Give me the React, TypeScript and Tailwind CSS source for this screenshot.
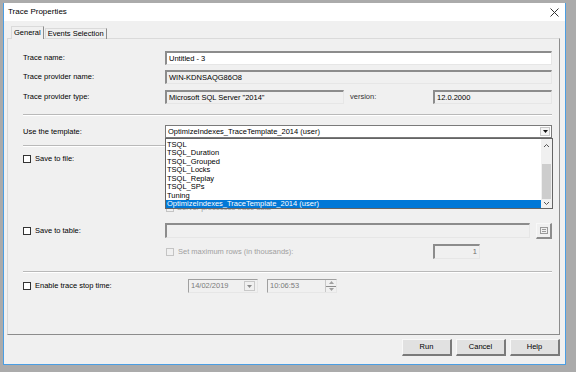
const FONT = "font-['Liberation_Sans',Arial,sans-serif]"

function Check({ disabled }: { disabled?: boolean }) {
  return (
    <span
      className={`block w-[8px] h-[8px] shrink-0 border ${
        disabled ? 'border-[#c4c4c4] bg-[#f0f0f0]' : 'border-[#333333] bg-white'
      }`}
    />
  )
}

function Field({
  className = '',
  white,
  children,
}: {
  className?: string
  white?: boolean
  children?: React.ReactNode
}) {
  return (
    <div
      className={`flex items-center px-[2px] border-t-2 border-l-2 border-b border-r border-t-[#8c8c8c] border-l-[#8c8c8c] border-b-[#e6e6e6] border-r-[#e6e6e6] ${
        white ? 'bg-white' : 'bg-[#f0f0f0]'
      } ${className}`}
    >
      {children}
    </div>
  )
}

function Separator({ className = '' }: { className?: string }) {
  return <div className={`h-[2px] border-t border-t-[#b9b9b9] border-b border-b-white ${className}`} />
}

const TEMPLATES = ['TSQL', 'TSQL_Duration', 'TSQL_Grouped', 'TSQL_Locks', 'TSQL_Replay', 'TSQL_SPs', 'Tuning']

function Button({ label }: { label: string }) {
  return (
    <button className="w-[50px] h-[17px] bg-[#e1e1e1] border border-t-[#f8f8f8] border-l-[#f8f8f8] border-r-2 border-b-2 border-r-[#7a7a7a] border-b-[#7a7a7a] text-center">
      {label}
    </button>
  )
}

export default function App() {
  return (
    <div className={`w-[576px] h-[372px] bg-[#ababab] pt-[3px] pl-[3px] text-[7.5px] leading-none text-black ${FONT}`}>
      <div className="w-[563px] h-[362px] bg-[#f0f0f0] border-l border-r border-b border-[#4b9ee3] flex flex-col">
        {/* Title bar */}
        <div className="h-[18px] shrink-0 bg-white flex items-center justify-between pl-[4px] pr-[6px]">
          <span className="text-[8px]">Trace Properties</span>
          <svg width="9" height="9" viewBox="0 0 9 9" className="mt-[1px]">
            <path d="M0.5 0.5 L8.5 8.5 M8.5 0.5 L0.5 8.5" stroke="#333" strokeWidth="1" />
          </svg>
        </div>

        <div className="flex flex-col pl-[3px] pt-[6px]">
          {/* Tabs */}
          <div className="flex items-end h-[12px] pl-[4px] relative z-10 -mb-px">
            <div className="h-[13px] px-[2px] flex items-center bg-[#f0f0f0] border-t border-l border-[#dadada] border-r border-r-[#8c8c8c]">
              General
            </div>
            <div className="h-[11px] px-[2px] ml-px flex items-center border-t border-l border-[#dadada] border-r border-r-[#8c8c8c]">
              Events Selection
            </div>
          </div>

          {/* Panel */}
          <div className="w-[553px] h-[297px] border border-[#dadada] border-r-[#8c8c8c] border-b-[#8c8c8c] flex flex-col pl-[15px] pr-[7px]">
            <div className="mt-[12px] h-[14px] flex items-center">
              <div className="w-[142px]">Trace name:</div>
              <Field white className="flex-1 h-full">Untitled - 3</Field>
            </div>
            <div className="mt-[5px] h-[14px] flex items-center">
              <div className="w-[142px]">Trace provider name:</div>
              <Field className="flex-1 h-full">WIN-KDNSAQG86O8</Field>
            </div>
            <div className="mt-[6px] h-[14px] flex items-center">
              <div className="w-[142px]">Trace provider type:</div>
              <Field className="w-[179px] h-full">Microsoft SQL Server "2014"</Field>
              <div className="w-[89px] pl-[6px] text-[#333]">version:</div>
              <Field className="flex-1 h-full">12.0.2000</Field>
            </div>
            <Separator className="mt-[10px]" />

            {/* Template */}
            <div className="mt-[9px] h-[13px] flex items-center relative">
              <div className="w-[142px]">Use the template:</div>
              <div className="flex-1 h-full bg-white border border-[#7a7a7a] flex items-center pl-[2px] pr-[1px]">
                <span className="flex-1">OptimizeIndexes_TraceTemplate_2014 (user)</span>
                <span className="w-[10px] h-[9px] flex items-center justify-center border border-[#c8c8c8] bg-[#f4f4f4]">
                  <svg width="5" height="3" viewBox="0 0 5 3">
                    <path d="M0 0 H5 L2.5 3 Z" fill="#111" />
                  </svg>
                </span>
              </div>
              <div className="absolute z-20 top-full left-[142px] -right-px h-[71px] bg-white border border-[#646464] flex">
                <div className="flex-1 flex flex-col pt-px">
                  {TEMPLATES.map((t) => (
                    <div key={t} className="h-[8.75px] flex items-center pl-px">
                      {t}
                    </div>
                  ))}
                  <div className="h-[8.75px] flex items-center pl-px bg-[#0078d7] text-white">
                    OptimizeIndexes_TraceTemplate_2014 (user)
                  </div>
                </div>
                <div className="w-[11px] bg-[#f0f0f0] flex flex-col items-center">
                  <svg width="7" height="9" viewBox="0 0 7 9" className="mt-[2px]">
                    <path d="M1 6 L3.5 3.5 L6 6" stroke="#555" fill="none" />
                  </svg>
                  <div className="mt-[14px] w-[9px] h-[35px] bg-[#cdcdcd]" />
                  <svg width="7" height="9" viewBox="0 0 7 9">
                    <path d="M1 3 L3.5 5.5 L6 3" stroke="#555" fill="none" />
                  </svg>
                </div>
              </div>
            </div>
            <Separator className="mt-[7px]" />

            <div className="mt-[7px] h-[10px] flex items-center gap-[4px]">
              <Check />
              <span>Save to file:</span>
            </div>

            {/* Row partly hidden under the open list */}
            <div className="mt-[39px] h-[10px] flex items-center">
              <div className="w-[143px]" />
              <Check disabled />
              <span className="ml-[3px] text-[#a0a0a0]">Server processes trace data</span>
            </div>

            <div className="mt-[10px] h-[15px] flex items-center">
              <div className="w-[142px] flex items-center gap-[4px]">
                <Check />
                <span>Save to table:</span>
              </div>
              <Field className="w-[365px] h-full" />
              <div className="ml-[6px] w-[16px] h-[16px] flex items-center justify-center bg-[#f0f0f0] border border-t-[#f8f8f8] border-l-[#f8f8f8] border-r-2 border-b-2 border-r-[#8c8c8c] border-b-[#8c8c8c]">
                <svg width="8" height="7" viewBox="0 0 8 7">
                  <rect x="0.5" y="0.5" width="7" height="6" fill="none" stroke="#9a9a9a" />
                  <path d="M2 2.5 H6 M2 4.5 H6" stroke="#9a9a9a" />
                </svg>
              </div>
            </div>

            <div className="mt-[6px] h-[15px] flex items-center">
              <div className="w-[143px]" />
              <div className="w-[267px] flex items-center gap-[4px]">
                <Check disabled />
                <span className="text-[#a0a0a0]">Set maximum rows (in thousands):</span>
              </div>
              <Field className="w-[47px] h-full justify-end text-[#6d6d6d]">1</Field>
            </div>

            <Separator className="mt-[12px]" />

            <div className="mt-[6px] h-[14px] flex items-center">
              <div className="w-[165px] flex items-center gap-[4px]">
                <Check />
                <span>Enable trace stop time:</span>
              </div>
              <div className="w-[70px] h-full flex items-center border-t border-l border-[#a0a0a0] border-b border-r border-b-[#e6e6e6] border-r-[#e6e6e6] pl-[2px] text-[#7a7a7a]">
                <span className="flex-1">14/02/2019</span>
                <span className="w-[11px] h-[10px] mr-[2px] flex items-center justify-center border border-[#c8c8c8]">
                  <svg width="5" height="3" viewBox="0 0 5 3">
                    <path d="M0 0 H5 L2.5 3 Z" fill="#8a8a8a" />
                  </svg>
                </span>
              </div>
              <div className="ml-[9px] w-[70px] h-full flex items-center border-t border-l border-[#a0a0a0] border-b border-r border-b-[#e6e6e6] border-r-[#e6e6e6] pl-[2px] text-[#7a7a7a]">
                <span className="flex-1">10:06:53</span>
                <span className="w-[11px] h-full flex flex-col border-l border-[#c8c8c8]">
                  <span className="flex-1 flex items-center justify-center border-b border-[#8c8c8c]">
                    <svg width="5" height="3" viewBox="0 0 5 3">
                      <path d="M0 3 H5 L2.5 0 Z" fill="#a0a0a0" />
                    </svg>
                  </span>
                  <span className="flex-1 flex items-center justify-center">
                    <svg width="5" height="3" viewBox="0 0 5 3">
                      <path d="M0 0 H5 L2.5 3 Z" fill="#a0a0a0" />
                    </svg>
                  </span>
                </span>
              </div>
            </div>
          </div>

          {/* Buttons */}
          <div className="w-[553px] flex justify-end gap-[4px] mt-[4px]">
            <Button label="Run" />
            <Button label="Cancel" />
            <Button label="Help" />
          </div>
        </div>
      </div>
    </div>
  )
}
